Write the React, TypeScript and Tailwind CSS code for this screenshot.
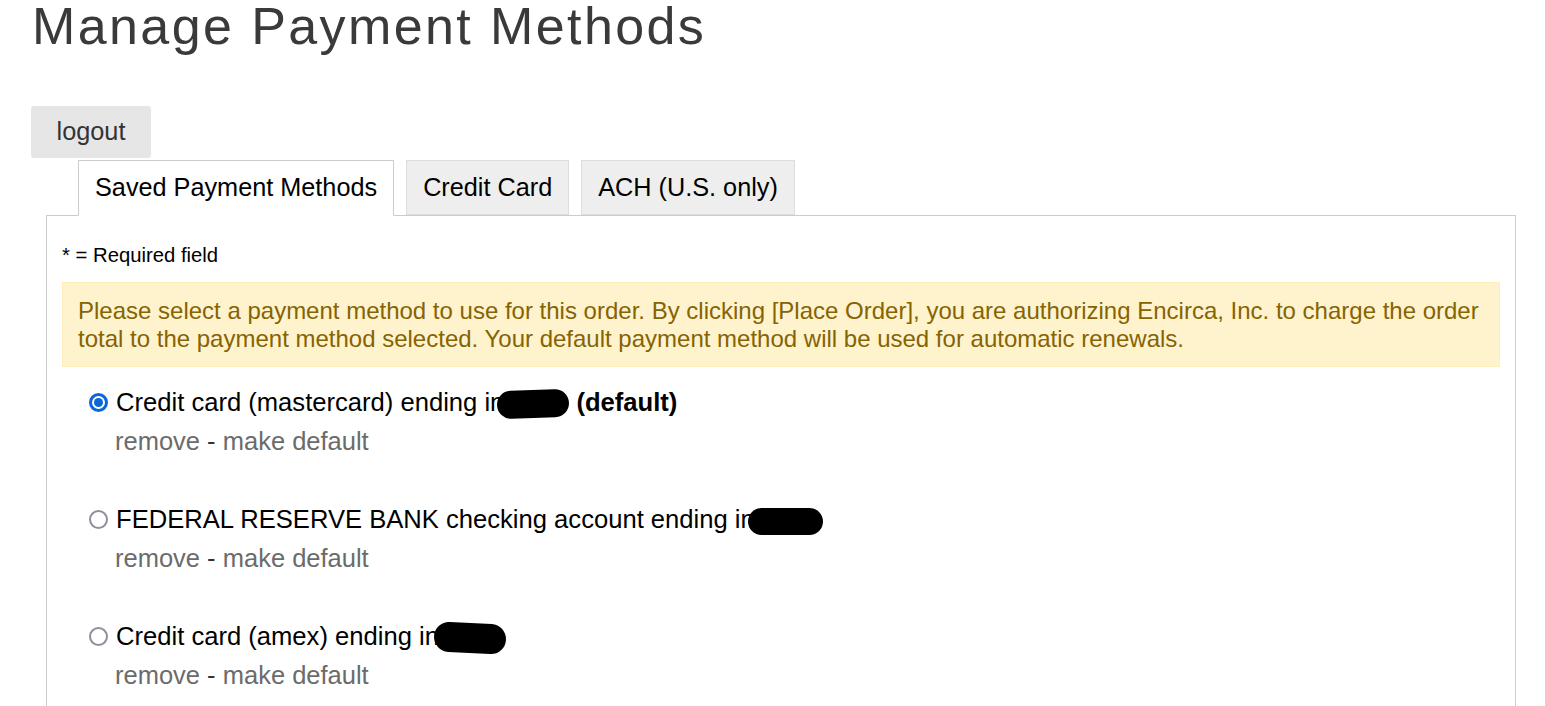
const methods = [
    {label: 'Credit card (mastercard) ending in', checked: true, isDefault: true, blob: 'w-[72px] h-[28px] -ml-[7px] -rotate-2'},
    {label: 'FEDERAL RESERVE BANK checking account ending in', checked: false, isDefault: false, blob: 'w-[75px] h-[27px] -ml-[7px]'},
    {label: 'Credit card (amex) ending in', checked: false, isDefault: false, blob: 'w-[72px] h-[30px] -ml-[5px] rotate-3'},
];

function Radio({checked}: { checked: boolean }) {
    if (checked) {
        return (
            <span className="w-[19px] h-[19px] rounded-full border-[3px] border-[#0b67d8] flex items-center justify-center shrink-0">
                <span className="w-[9px] h-[9px] rounded-full bg-[#0b67d8]"></span>
            </span>
        );
    }
    return <span className="w-[19px] h-[19px] rounded-full border-[2.5px] border-[#8f8f9d] shrink-0"></span>;
}

export default function App() {
    return (
        <div className="min-h-screen bg-white pl-[31px] pr-[29px] font-['Liberation_Sans',Arial,sans-serif] text-black">
            <h1 className="text-[52px] leading-none tracking-[2.4px] text-[#3a3a3a] pl-px">Manage Payment Methods</h1>

            <button className="mt-[54px] h-[52px] w-[120px] bg-[#e6e6e6] rounded-[3px] text-[25.3px] text-[#333]">
                logout
            </button>

            <ul className="flex gap-[12px] ml-[47px] mt-[2px] relative z-10 text-[25.25px]">
                <li className="h-[56px] -mb-px px-4 flex items-center border border-[#cccccc] border-b-white bg-white">
                    Saved Payment Methods
                </li>
                <li className="h-[55px] px-4 flex items-center border border-[#dddddd] bg-[#eeeeee]">
                    Credit Card
                </li>
                <li className="h-[55px] px-4 flex items-center border border-[#dddddd] bg-[#eeeeee]">
                    ACH (U.S. only)
                </li>
            </ul>

            <div className="ml-[15px] border border-[#cccccc] px-[15px] pt-[27px] pb-10">
                <p className="text-[20.3px] leading-[24px]">* = Required field</p>

                <div className="mt-[15px] bg-[#fff3cd] border border-[#ffeeba] text-[#856404] px-[15px] pt-[14px] pb-[13px] text-[24px] leading-[28px]">
                    Please select a payment method to use for this order. By clicking [Place Order], you are authorizing
                    Encirca, Inc. to charge the order total to the payment method selected. Your default payment method
                    will be used for automatic renewals.
                </div>

                <div className="pt-[16px] pl-[27px] leading-[39px]">
                    {methods.map((m) => (
                        <div key={m.label} className="mb-[39px]">
                            <label className="flex items-center gap-[8px] text-[25.6px]">
                                <Radio checked={m.checked}/>
                                <span className="whitespace-nowrap">
                                    {m.label}
                                    <span className={`inline-block align-middle rounded-full bg-black ${m.blob}`}></span>
                                    {m.isDefault && <b> (default)</b>}
                                </span>
                            </label>
                            <div className="pl-[26px] text-[25.5px]">
                                <a href="#" className="text-[#6b6b6b]">remove</a>
                                <span className="text-[#333]"> - </span>
                                <a href="#" className="text-[#6b6b6b]">make default</a>
                            </div>
                        </div>
                    ))}
                </div>
            </div>
        </div>
    );
}
